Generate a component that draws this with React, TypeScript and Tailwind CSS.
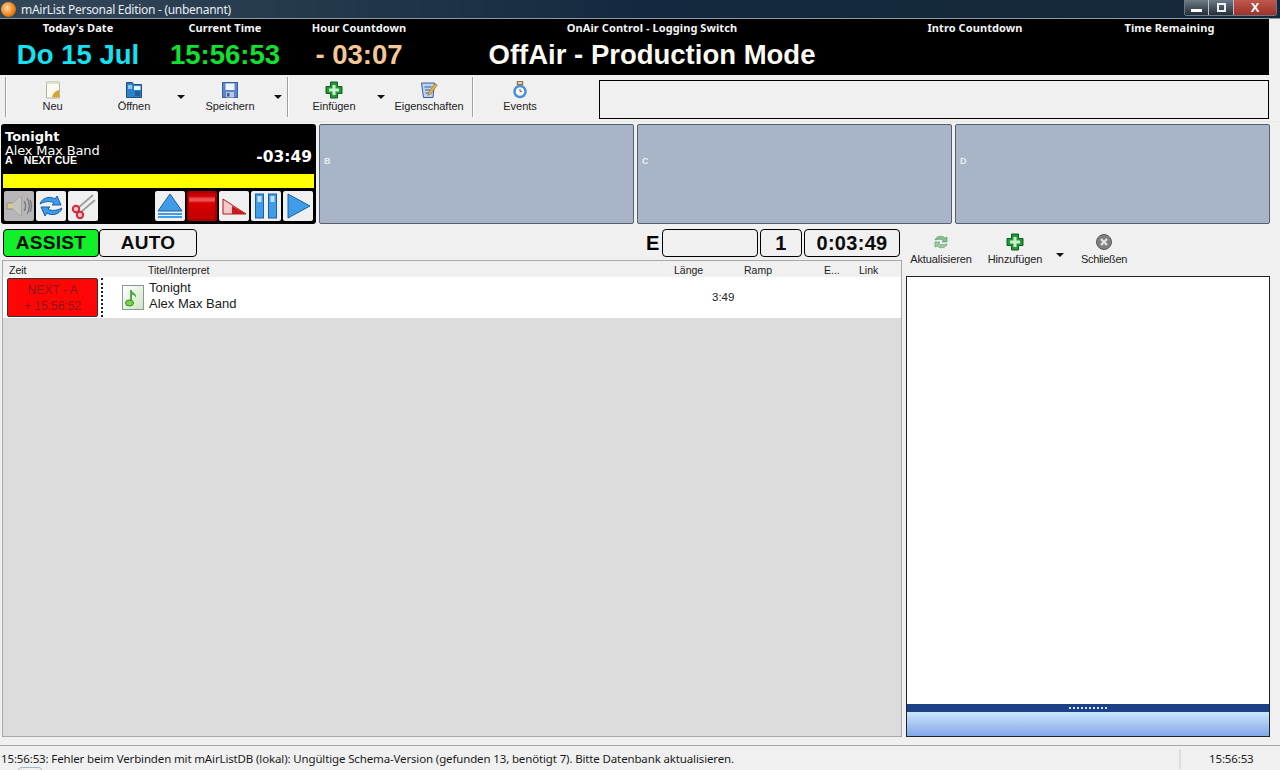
import React from "react";

const Neu = () => (
  <svg width="18" height="18" viewBox="0 0 18 18"><path d="M2.500 1h13v16h-13z" fill="#fbf9f0" stroke="#b4b4a4" /><path d="M2.500 1h13v2h-13z" fill="#d9e4cf" /><path d="M8 16.500c.5-4 3-6.500 7-7.500v7.500z" fill="#d6a431" /></svg>
);
const Open = () => (
  <svg width="18" height="18" viewBox="0 0 18 18"><path d="M1.500 1.500h6l1 2h8v13h-15z" fill="#2f7fcb" stroke="#1f4f85" /><rect x="9" y="5" width="6.500" height="4" fill="#e9f5fc" /><rect x="3" y="4" width="4" height="4" fill="#8ec8ef" /><rect x="10" y="10" width="5" height="5" fill="#1f5f9e" /></svg>
);
const Save = () => (
  <svg width="18" height="18" viewBox="0 0 18 18"><rect x="1.500" y="1.500" width="15" height="15" fill="#5a86cf" stroke="#3a5f9f" /><rect x="4.500" y="2.500" width="9" height="6.500" fill="#f0f4fb" /><rect x="5" y="11" width="8" height="5.500" fill="#b9c8de" /><rect x="6" y="12" width="2.500" height="3.500" fill="#3c5f96" /></svg>
);
const Plus = () => (
  <svg width="18" height="18" viewBox="0 0 18 18"><path d="M5.500 1h7v4.500H17v7h-4.500V17h-7v-4.500H1v-7h4.500z" fill="#1f9a35" stroke="#145a26" /><path d="M7.500 4h3v3.500H14v3h-3.500V14h-3v-3.500H4v-3h3.500z" fill="#c9f2cc" /></svg>
);
const Props = () => (
  <svg width="18" height="18" viewBox="0 0 18 18"><path d="M1.500 2h13l-1.500 14.500H3.500z" fill="#bcd3f0" stroke="#3a5f9f" /><path d="M4.500 6h7M5 9h5.500M5.500 12h4" stroke="#3a5f9f" /><path d="M8.500 11.500l6.500-9 2.200 1.600-6.500 9-3 1.200z" fill="#e8b23f" stroke="#8f6425" strokeWidth=".6" /></svg>
);
const Events = () => (
  <svg width="18" height="18" viewBox="0 0 18 18"><rect x="6.500" y="0.500" width="5" height="3" fill="none" stroke="#96734a" strokeWidth="1.400" /><circle cx="9" cy="10.500" r="6.800" fill="#4a8fd6" /><circle cx="9" cy="10.500" r="4.300" fill="#f4f8fc" /><path d="M9 8v2.500h2" stroke="#666" fill="none" /></svg>
);
const Refresh = () => (
  <svg width="18" height="18" viewBox="0 0 18 18"><path d="M3 7c1-4 7-5 10-2l2-1v5h-5l1.500-1.500C9.500 6 6 6 3 7z" fill="#7dc48a" stroke="#5a8f68" strokeWidth=".6" /><path d="M15 11c-1 4-7 5-10 2l-2 1V9h5L6.500 10.500C8.500 12 12 12 15 11z" fill="#9bd0a4" stroke="#5a8f68" strokeWidth=".6" /></svg>
);
const Close = () => (
  <svg width="18" height="18" viewBox="0 0 18 18"><circle cx="9" cy="9" r="7.500" fill="#808080" stroke="#5a5a5a" /><path d="M6 6l6 6M12 6l-6 6" stroke="#e2e2e2" strokeWidth="2.400" /></svg>
);

function ToolItem({ label, w, icon, ml = "" }: { label: string; w: string; icon: React.ReactNode; ml?: string }) {
  return (
    <div className={`${w} ${ml} flex flex-col items-center shrink-0`}>
      <div className="h-[18px] mt-[6px]">{icon}</div>
      <div className="text-[11px] leading-[14px] text-[#222] tracking-[-0.05px]">{label}</div>
    </div>
  );
}
const Caret = ({ w = "w-[22px]" }: { w?: string }) => (
  <div className={`${w} shrink-0 flex justify-center pt-[20px]`}>
    <div className="w-0 h-0 border-l-[4px] border-r-[4px] border-t-[4px] border-l-transparent border-r-transparent border-t-[#111]" />
  </div>
);
const Sep = () => <div className="w-[2px] h-[40px] mt-[2px] bg-[#a0a0a0] border-r border-white shrink-0" />;

function HCol({ label, value, color }: { label: string; value?: string; color?: string }) {
  return (
    <div className="flex flex-col items-center">
      <div className="mt-[2px] h-[14px] text-[11px] leading-[14px] font-bold text-[#f4f4f4] font-['Noto_Sans',sans-serif] tracking-[0.08px] whitespace-nowrap">{label}</div>
      {value && <div className={`mt-[5px] text-[27.500px] leading-[30px] font-bold whitespace-nowrap ${color}`}>{value}</div>}
    </div>
  );
}

function PBtn({ children, bg = "bg-[#f0f0f0]" }: { children: React.ReactNode; bg?: string }) {
  return <div className={`w-[30px] h-[30px] rounded-[2px] ${bg} flex items-center justify-center shrink-0`}>{children}</div>;
}

function Deck({ letter }: { letter: string }) {
  return (
    <div className="w-[315px] h-[100px] rounded-[2px] border border-[#56606e] bg-[#a8b5c9] flex items-center pl-[4px] shrink-0">
      <span className="text-[9px] font-bold text-[#e8edf4] mt-[-26px] leading-none">{letter}</span>
    </div>
  );
}

function ModeBox({ children, w, bg = "bg-[#f0f0f0]", tx = "text-[20px]" }: { children?: React.ReactNode; w: string; bg?: string; tx?: string }) {
  return (
    <div className={`${w} ${bg} ${tx} h-[28px] rounded-[4px] border border-black flex items-center justify-center font-bold text-[#0c0c0c] shrink-0 tracking-[0.3px]`}>
      {children}
    </div>
  );
}

export default function App() {
  return (
    <div className="relative w-[1280px] h-[770px] overflow-hidden bg-[#f0f0f0] flex flex-col font-['Liberation_Sans',Arial,sans-serif]">
      {/* title bar */}
      <div className="h-[19px] shrink-0 flex items-start bg-gradient-to-r from-[#35485a] via-[#14293f] to-[#16283a] border-b border-[#8b99a6]">
        <div className="ml-[1px] mt-[2px] w-[15px] h-[15px] rounded-full bg-[radial-gradient(circle_at_40%_40%,#ffd9a0,#ea7d14_60%,#8a3f05)]" />
        <div className="ml-[5px] mt-[2px] text-[12px] leading-[15px] text-[#e8eef2] font-['Noto_Sans',sans-serif] tracking-[-0.28px]">mAirList Personal Edition - (unbenannt)</div>
        <div className="ml-auto mr-[3px] flex h-[16px] rounded-b-[3px] border border-[#6a7884] border-t-0 overflow-hidden">
          <div className="w-[24px] bg-gradient-to-b from-[#6e7a85] to-[#252f39] flex items-center justify-center border-r border-[#b8c2ca]"><div className="w-[11px] h-[3px] bg-white mt-[5px]" /></div>
          <div className="w-[25px] bg-gradient-to-b from-[#6e7a85] to-[#252f39] flex items-center justify-center border-r border-[#b8c2ca]"><div className="w-[9px] h-[9px] border-2 border-[#eef2f5]" /></div>
          <div className="w-[42px] bg-gradient-to-b from-[#c0584e] to-[#9c3229] flex items-center justify-center text-white text-[13px] font-bold leading-none">X</div>
        </div>
      </div>

      {/* header */}
      <div className="flex shrink-0">
        <div className="w-[1269px] h-[56px] bg-black grid grid-cols-[156px_138px_130px_456px_190px_199px]">
          <HCol label="Today's Date" value="Do 15 Jul" color="text-[#14e2f2]" />
          <HCol label="Current Time" value="15:56:53" color="text-[#12e030]" />
          <HCol label="Hour Countdown" value="- 03:07" color="text-[#f3c797]" />
          <HCol label="OnAir Control - Logging Switch" value="OffAir - Production Mode" color="text-[#fbfbf2]" />
          <HCol label="Intro Countdown" />
          <HCol label="Time Remaining" />
        </div>
      </div>

      {/* toolbar */}
      <div className="h-[47px] shrink-0 flex pl-[5px] border-b border-[#e8e8e8]">
        <Sep />
        <ToolItem w="w-[91px]" label="Neu" icon={<Neu />} />
        <ToolItem w="w-[72px]" label="Öffnen" icon={<Open />} />
        <Caret />
        <ToolItem w="w-[76px]" label="Speichern" icon={<Save />} />
        <Caret w="w-[19px]" />
        <Sep />
        <ToolItem ml="ml-[7px]" w="w-[76px]" label="Einfügen" icon={<Plus />} />
        <Caret w="w-[18px]" />
        <ToolItem w="w-[78px]" label="Eigenschaften" icon={<Props />} />
        <div className="w-[4px] shrink-0" />
        <Sep />
        <ToolItem w="w-[92px]" label="Events" icon={<Events />} />
        <div className="ml-[33px] mt-[5px] w-[670px] h-[39px] border border-black bg-[#f0f0f0] shrink-0" />
      </div>

      {/* players */}
      <div className="mt-[2px] h-[100px] shrink-0 flex gap-[3px] pl-[1px]">
        <div className="w-[315px] h-[100px] rounded-[3px] bg-black relative shrink-0 flex flex-col">
          <div className="h-[50px] relative text-white font-['DejaVu_Sans',sans-serif]">
            <div className="absolute left-[4px] top-[5px] text-[13px] leading-[15px] font-bold">Tonight</div>
            <div className="absolute left-[4px] top-[19px] text-[13px] leading-[15px] tracking-[-0.15px]">Alex Max Band</div>
            <div className="absolute left-[4px] top-[31px] text-[10.500px] leading-[10px] font-bold whitespace-pre font-['Liberation_Sans',sans-serif]">A    NEXT CUE</div>
            <div className="absolute right-[4px] top-[25px] text-[15.500px] leading-[17px] font-bold">-03:49</div>
          </div>
          <div className="h-[14px] mx-[2px] bg-[#ffff00]" />
          <div className="mt-[3px] mx-[3px] flex">
            <div className="flex gap-[2px]">
              <PBtn bg="bg-[#b9b6ba]">
                <svg width="28" height="28" viewBox="0 0 28 28"><path d="M2 11h6l8-7v20l-8-7H2z" fill="#d8c98e" stroke="#8e8e86" /><path d="M8 11l8-7v20l-8-7z" fill="#c4c4c0" /><path d="M19 9c2 3 2 7 0 10M22 6c3 5 3 11 0 16M25 8c2 4 2 8 0 12" stroke="#7a7a7a" strokeWidth="1.400" fill="none" /></svg>
              </PBtn>
              <PBtn>
                <svg width="28" height="28" viewBox="0 0 28 28"><path d="M3 12c2-7 11-8 15-5l2-3 4 9-9 0 2-2c-3-2-9-2-14 1z" fill="#3a9be8" stroke="#1a5fa8" /><path d="M25 16c-2 7-11 8-15 5l-2 3-4-9 9 0-2 2c3 2 9 2 14-1z" fill="#3a9be8" stroke="#1a5fa8" /></svg>
              </PBtn>
              <PBtn>
                <svg width="28" height="28" viewBox="0 0 28 28"><path d="M9 16L24 3M12 20L26 8" stroke="#a0a0a0" strokeWidth="2" /><circle cx="7" cy="17" r="3.200" fill="#f4c4c8" stroke="#d42a3c" strokeWidth="2" /><circle cx="11" cy="23" r="3.200" fill="#f4c4c8" stroke="#d42a3c" strokeWidth="2" /></svg>
              </PBtn>
            </div>
            <div className="ml-[57px] flex gap-[2px]">
              <PBtn>
                <svg width="28" height="28" viewBox="0 0 28 28"><path d="M14 2L26 19H2z" fill="#3f9de8" stroke="#1a5fa8" /><rect x="2" y="21" width="24" height="2" fill="#3f9de8" /><rect x="2" y="24" width="24" height="2" fill="#3f9de8" /></svg>
              </PBtn>
              <PBtn bg="bg-[#a80000]">
                <div className="w-[26px] h-[26px] bg-[linear-gradient(to_bottom,#cc0000_0%,#cc0000_12%,#ee5050_22%,#ee5050_30%,#d80000_38%,#c40000_100%)]" />
              </PBtn>
              <PBtn>
                <svg width="28" height="28" viewBox="0 0 28 28"><path d="M3 7L26 22H3z" fill="#f6c9c9" stroke="#a81a1a" /><path d="M12 14L26 22H12z" fill="#cc1818" /></svg>
              </PBtn>
              <PBtn>
                <svg width="28" height="28" viewBox="0 0 28 28"><rect x="3.500" y="2" width="8" height="24" fill="#3f9de8" stroke="#1a5fa8" /><rect x="16.500" y="2" width="8" height="24" fill="#3f9de8" stroke="#1a5fa8" /><rect x="5.500" y="4" width="4" height="6" fill="#bfe0f8" /><rect x="18.500" y="4" width="4" height="6" fill="#bfe0f8" /></svg>
              </PBtn>
              <PBtn>
                <svg width="28" height="28" viewBox="0 0 28 28"><path d="M4 2L26 14 4 26z" fill="#3f9de8" stroke="#1a5fa8" /></svg>
              </PBtn>
            </div>
          </div>
        </div>
        <Deck letter="B" />
        <Deck letter="C" />
        <Deck letter="D" />
      </div>

      {/* main */}
      <div className="flex-1 min-h-0 flex pl-[2px]">
        <div className="w-[900px] shrink-0 flex flex-col">
          <div className="mt-[5px] h-[28px] flex pl-[1px] shrink-0">
            <ModeBox w="w-[96px]" bg="bg-[#12f02a]" tx="text-[19px]">ASSIST</ModeBox>
            <ModeBox w="w-[98px]" tx="text-[19px]">AUTO</ModeBox>
            <div className="ml-[449px] w-[15px] text-[20px] leading-[28px] font-bold text-black shrink-0">E</div>
            <div className="ml-[1px]"><ModeBox w="w-[96px]" /></div>
            <div className="ml-[2px]"><ModeBox w="w-[42px]">1</ModeBox></div>
            <div className="ml-[2px]"><ModeBox w="w-[96px]">0:03:49</ModeBox></div>
          </div>
          <div className="mt-[3px] h-[477px] border border-[#a8a8a8] bg-[#dcdcdc] flex flex-col shrink-0">
            <div className="h-[16px] bg-[#f0f0f0] flex text-[10.500px] leading-[16px] text-[#222] pt-[1px] shrink-0">
              <div className="w-[145px] pl-[6px]">Zeit</div>
              <div className="w-[526px]">Titel/Interpret</div>
              <div className="w-[70px]">Länge</div>
              <div className="w-[80px]">Ramp</div>
              <div className="w-[35px]">E...</div>
              <div className="w-[30px]">Link</div>
            </div>
            <div className="h-[41px] bg-white flex items-center shrink-0">
              <div className="ml-[4px] w-[91px] h-[39px] bg-[#ff0606] rounded-[2px] border border-[#333] flex flex-col items-center justify-center text-[12px] leading-[16px] text-[#8c1616] shrink-0">
                <div>NEXT - A</div>
                <div>+ 15:56:52</div>
              </div>
              <div className="ml-[3px] w-[2px] h-[39px] border-l-2 border-dotted border-[#222] shrink-0" />
              <div className="ml-[19px] w-[22px] h-[25px] border border-[#8a96a0] bg-gradient-to-br from-white to-[#cfe6c0] flex items-center justify-center shrink-0">
                <svg width="16" height="20" viewBox="0 0 16 20"><path d="M6 2v12" stroke="#2a8a20" strokeWidth="1.500" /><path d="M6 2c1 3 6 3 5 8-1-3-3-3-5-4z" fill="#47a83a" /><ellipse cx="4.500" cy="15" rx="4" ry="3" fill="#7fd04f" stroke="#2a8a20" /></svg>
              </div>
              <div className="ml-[5px] pb-[3px] text-[13px] leading-[16px] text-[#1a1a1a] w-[540px] shrink-0">
                <div>Tonight</div>
                <div>Alex Max Band</div>
              </div>
              <div className="ml-[23px] text-[11.500px] text-[#222]">3:49</div>
            </div>
          </div>
        </div>

        {/* right */}
        <div className="ml-[4px] w-[364px] shrink-0 flex flex-col">
          <div className="h-[52px] flex shrink-0 pt-[9px]">
            <div className="w-[70px] flex flex-col items-center shrink-0"><Refresh /><div className="text-[11px] leading-[14px] mt-[1px] text-[#222] tracking-[-0.1px]">Aktualisieren</div></div>
            <div className="ml-[7px] w-[64px] flex flex-col items-center shrink-0"><Plus /><div className="text-[11px] leading-[14px] mt-[1px] text-[#222] tracking-[-0.1px]">Hinzufügen</div></div>
            <div className="ml-[3px]"><Caret w="w-[20px]" /></div>
            <div className="ml-[4px] w-[60px] flex flex-col items-center shrink-0"><Close /><div className="text-[11px] leading-[14px] mt-[1px] text-[#222] tracking-[-0.3px]">Schließen</div></div>
          </div>
          <div className="h-[461px] border border-[#222] flex flex-col shrink-0">
            <div className="flex-1 bg-white" />
            <div className="h-[8px] bg-[#1c4187] flex items-center justify-center shrink-0">
              <div className="w-[38px] border-t-2 border-dotted border-[#cfe2ff]" />
            </div>
            <div className="h-[24px] bg-gradient-to-b from-[#c8e8ff] via-[#a9c6f2] to-[#81a8ea] shrink-0" />
          </div>
        </div>
      </div>

      {/* status bar */}
      <div className="h-[25px] shrink-0 border-t border-[#a9a9a9] flex items-center text-[11.500px] leading-[16px] text-[#1c1c1c] font-['Noto_Sans',sans-serif] pt-[2px] tracking-[-0.14px]">
        <div className="pl-[1px] w-[1179px] whitespace-nowrap shrink-0">15:56:53: Fehler beim Verbinden mit mAirListDB (lokal): Ungültige Schema-Version (gefunden 13, benötigt 7). Bitte Datenbank aktualisieren.</div>
        <div className="w-[2px] h-[20px] bg-[#dedede] shrink-0" />
        <div className="pl-[28px]">15:56:53</div>
      </div>
      <div className="absolute left-[17px] top-[767px] w-[26px] h-[10px] rounded-full border border-[#9fb4c4]" />
    </div>
  );
}
